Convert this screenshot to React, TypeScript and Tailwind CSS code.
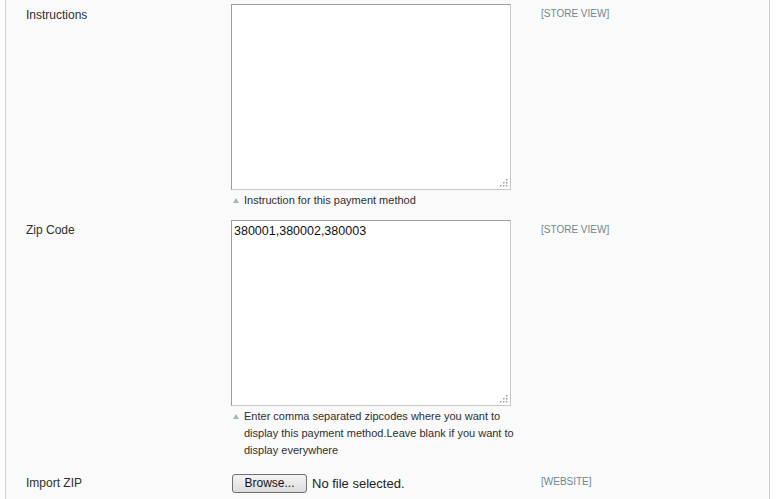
const font = { fontFamily: '"Liberation Sans", Arial, sans-serif' };

function Grip() {
  return (
    <svg className="absolute right-[2px] bottom-[2px]" width="9" height="9" viewBox="0 0 9 9">
      {[
        [7, 1],
        [4, 4],
        [7, 4],
        [1, 7],
        [4, 7],
        [7, 7],
      ].map(([x, y], i) => (
        <rect key={i} x={x} y={y} width="1.5" height="1.5" fill="#9a9a9a" />
      ))}
    </svg>
  );
}

function Area({ value }: { value?: string }) {
  return (
    <div className="relative w-[280px] h-[186px] bg-white border border-t-[#9c9c9c] border-l-[#9c9c9c] border-r-[#c8c8c8] border-b-[#c8c8c8]">
      <div className="px-[2px] pt-[2px] text-[12.5px] leading-[16px] text-[#111]">{value}</div>
      <Grip />
    </div>
  );
}

function Hint({ children }: { children: string }) {
  return (
    <div className="flex mt-[2px]">
      <div className="w-[13px] shrink-0 pt-[6px] pl-[2px]">
        <svg width="6" height="5" viewBox="0 0 6 5">
          <polygon points="3,0 6,5 0,5" fill="#a7b4ba" />
        </svg>
      </div>
      <p className="w-[274px] shrink-0 text-[11px] leading-[17px] text-[#2f2f2f]">{children}</p>
    </div>
  );
}

function Label({ children }: { children: string }) {
  return <div className="w-[225px] pl-[20px] text-[12px] leading-[16px] text-[#2f2f2f]">{children}</div>;
}

function Scope({ children }: { children: string }) {
  return <div className="pl-[30px] text-[10px] leading-[16px] text-[#6e8791]">{children}</div>;
}

export default function App() {
  return (
    <div className="min-h-screen bg-white" style={font}>
      <div className="ml-[5px] w-[765px] min-h-[499px] bg-[#fafafa] border-x border-[#cfcfcf] pb-6">
        {/* Instructions */}
        <div className="flex items-start pt-[4px]">
          <div className="pt-[3px]">
            <Label>Instructions</Label>
          </div>
          <div className="w-[280px]">
            <Area />
            <Hint>Instruction for this payment method</Hint>
          </div>
          <div className="pt-[2px]">
            <Scope>[STORE VIEW]</Scope>
          </div>
        </div>

        {/* Zip Code */}
        <div className="flex items-start mt-[11px]">
          <div className="pt-[2px]">
            <Label>Zip Code</Label>
          </div>
          <div className="w-[280px]">
            <Area value="380001,380002,380003" />
            <Hint>
              Enter comma separated zipcodes where you want to display this payment method.Leave blank if you want to display everywhere
            </Hint>
          </div>
          <div className="pt-[2px]">
            <Scope>[STORE VIEW]</Scope>
          </div>
        </div>

        {/* Import ZIP */}
        <div className="flex items-start mt-[15px]">
          <div className="pt-[1px]">
            <Label>Import ZIP</Label>
          </div>
          <div className="w-[280px] flex items-center gap-[5px] pl-[1px]">
            <button className="w-[75px] h-[19px] rounded-[3px] border border-[#707070] bg-gradient-to-b from-[#f4f4f4] to-[#dcdcdc] text-[12px] leading-[17px] text-[#111]">
              Browse...
            </button>
            <span className="text-[13px] text-[#222]">No file selected.</span>
          </div>
          <div>
            <Scope>[WEBSITE]</Scope>
          </div>
        </div>
      </div>
    </div>
  );
}
